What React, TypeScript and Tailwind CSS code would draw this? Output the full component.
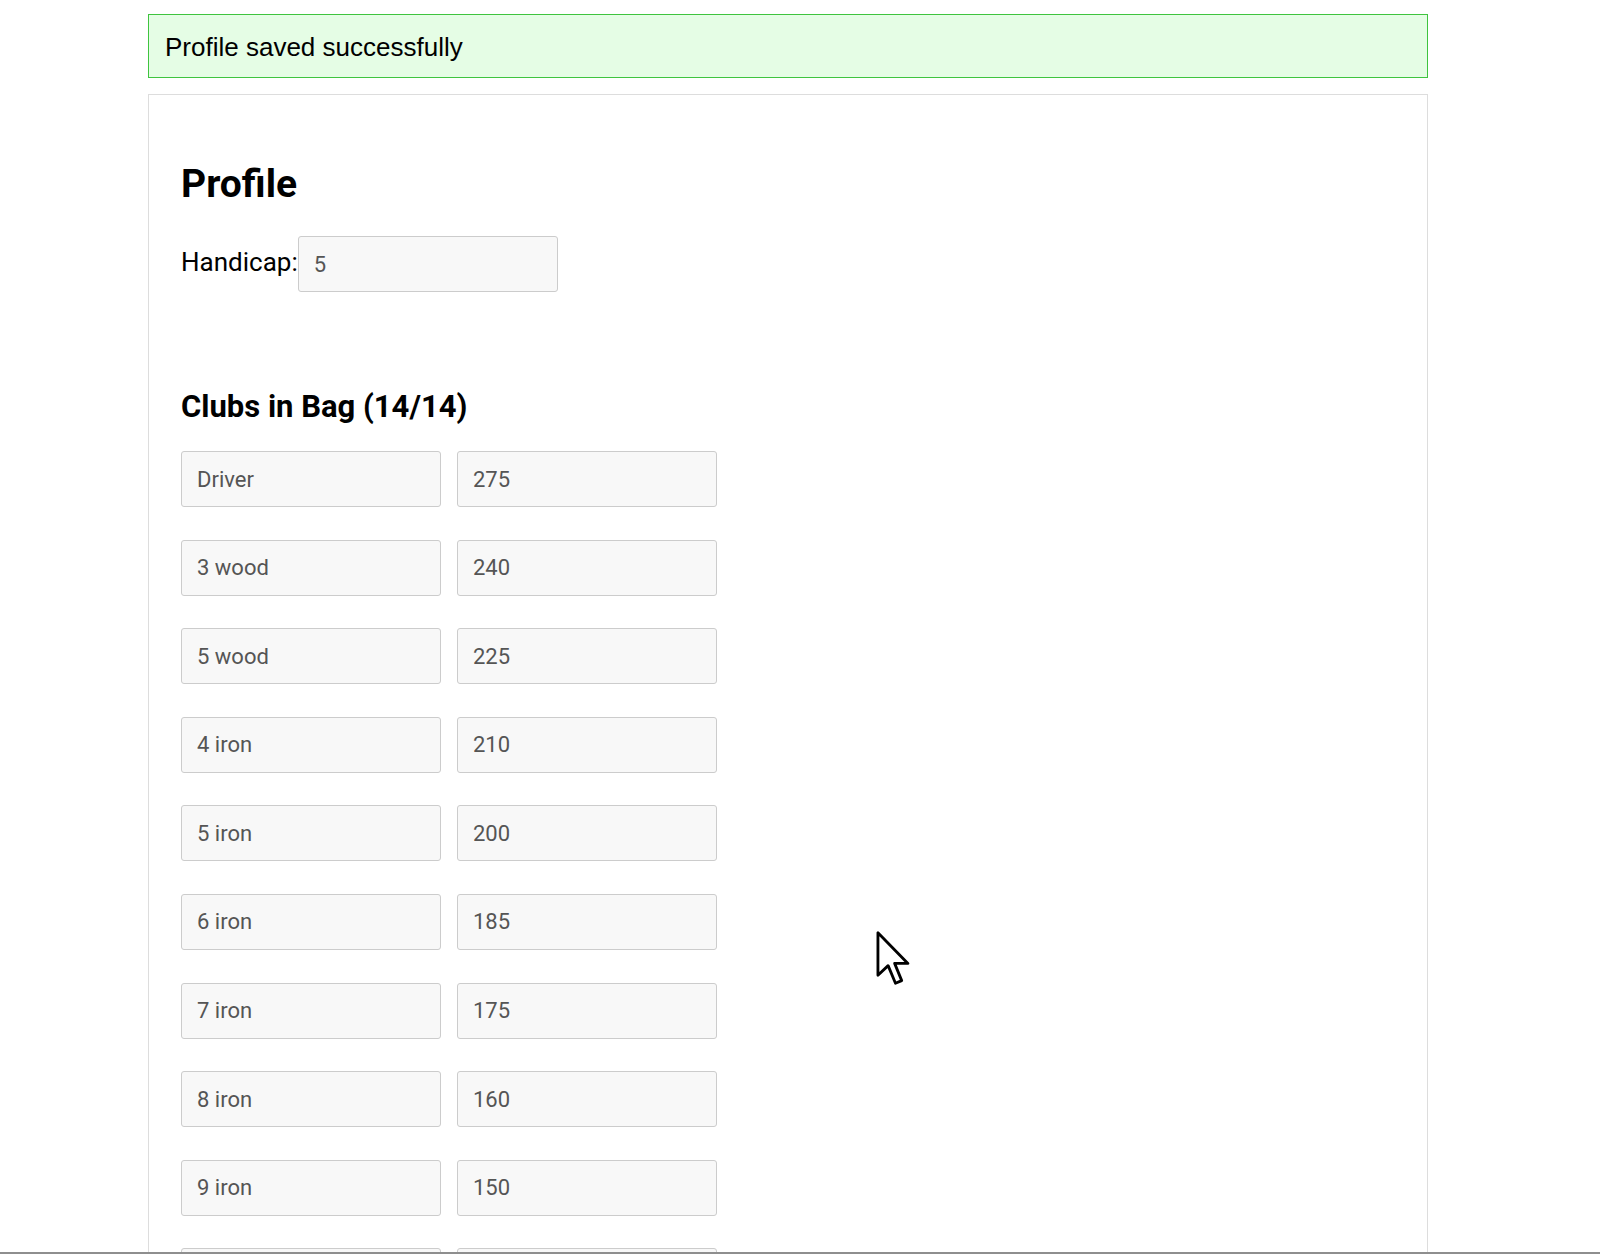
import React from "react";

const clubs = [
  { name: "Driver", distance: "275" },
  { name: "3 wood", distance: "240" },
  { name: "5 wood", distance: "225" },
  { name: "4 iron", distance: "210" },
  { name: "5 iron", distance: "200" },
  { name: "6 iron", distance: "185" },
  { name: "7 iron", distance: "175" },
  { name: "8 iron", distance: "160" },
  { name: "9 iron", distance: "150" },
  { name: "Pitching wedge", distance: "140" },
  { name: "Gap wedge", distance: "125" },
  { name: "Sand wedge", distance: "110" },
  { name: "Lob wedge", distance: "90" },
  { name: "Putter", distance: "0" },
];

const inputClass =
  "h-[56px] w-[260px] rounded-[3px] border border-[#cccccc] bg-[#f8f8f8] pl-[15px] text-[22px] text-[#555555] outline-none font-['Roboto',sans-serif]";

function Cursor() {
  return (
    <svg
      className="absolute left-[875px] top-[930px]"
      width="37"
      height="58"
      viewBox="0 0 13 20.5"
    >
      <path
        d="M1 1 L1 16 L4.6 12.6 L7.2 18.8 L9.4 17.9 L6.9 11.8 L11.6 11.8 Z"
        fill="#ffffff"
        stroke="#000000"
        strokeWidth="1"
        strokeLinejoin="round"
      />
    </svg>
  );
}

export default function App() {
  return (
    <div className="relative flex h-[1254px] flex-col overflow-hidden bg-white">
      <div className="flex-1 overflow-hidden pt-[14px]">
        <div className="ml-[148px] w-[1280px]">
          {/* status banner */}
          <div className="flex h-[64px] items-center border border-[#3fc43f] bg-[#e5fde5] pl-[16px] pt-[2px] font-['Liberation_Sans',Arial,sans-serif] text-[26px] text-black">
            Profile saved successfully
          </div>

          <div className="mt-[16px] border border-[#dddddd] px-[32px] pt-[66px] font-['Roboto',sans-serif]">
            <h2 className="text-[39px] leading-[47px] font-bold text-black">Profile</h2>

            <div className="mt-[28px] flex items-center">
              <label className="pb-[3px] text-[26px] text-black">Handicap:</label>
              <input className={inputClass} defaultValue="5" />
            </div>

            <h3 className="mt-[96px] text-[31px] leading-[37px] font-bold text-black">
              Clubs in Bag (14/14)
            </h3>

            <div className="mt-[26px] flex flex-col gap-[32.6px]">
              {clubs.map((c) => (
                <div key={c.name} className="flex gap-[16px]">
                  <input className={inputClass} defaultValue={c.name} />
                  <input className={inputClass} defaultValue={c.distance} />
                </div>
              ))}
            </div>
          </div>
        </div>
      </div>
      <div className="h-[2px] bg-[#8e8e8e]" />
      <Cursor />
    </div>
  );
}
